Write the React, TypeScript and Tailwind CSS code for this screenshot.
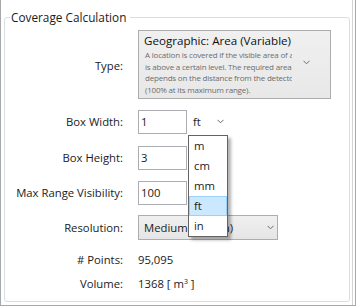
import React from "react";

function Chevron({ className = "" }: { className?: string }) {
  return (
    <svg width="7" height="5" viewBox="0 0 7 5" className={className}>
      <path d="M0.5 0.8 L3.5 3.8 L6.5 0.8" fill="none" stroke="#6a6a6a" strokeWidth="1" />
    </svg>
  );
}

function Label({ children, className = "" }: { children: React.ReactNode; className?: string }) {
  return <div className={"w-[118px] shrink-0 text-right " + className}>{children}</div>;
}

export default function App() {
  const items = ["m", "cm", "mm", "ft", "in"];
  return (
    <div
      className="w-[357px] h-[307px] bg-white text-[11.3px] leading-[16px] text-[#1b1b1b]"
      style={{ fontFamily: '"Open Sans", "Noto Sans", sans-serif' }}
    >
      <div className="w-[356px] h-[306px] border-l border-b border-r border-[#a8a8a8] flex">
        <div className="w-[352px] h-full border-r border-[#d4d4d4]">
          <fieldset className="ml-[3px] mt-[9px] w-[346px] h-[293px] border border-[#d5dfe5] rounded-[3px] min-w-0">
            <legend className="ml-[5px] pl-[1px] pr-[4px] text-[11.8px] leading-[16px] text-[#1b1b1b]">
              Coverage Calculation
            </legend>
            <div className="flex flex-col">
              {/* Type */}
              <div className="flex items-center mt-[5px]">
                <Label className="pt-[3px]">Type:</Label>
                <div className="ml-[15px] w-[193px] h-[69px] border border-[#adadad] bg-gradient-to-b from-[#f0f0f0] to-[#e8e8e8] flex items-center">
                  <div className="w-[153px] pl-[5px] pt-[2px] self-start overflow-hidden">
                    <div className="text-[11.6px] leading-[16px] text-[#111] whitespace-nowrap">
                      Geographic: Area (Variable)
                    </div>
                    <div className="text-[8px] leading-[11.7px] tracking-[-0.2px] text-[#6d6d6d] whitespace-nowrap pl-[1px]">
                      <div>A location is covered if the visible area of a</div>
                      <div>is above a certain level. The required area</div>
                      <div>depends on the distance from the detector</div>
                      <div>(100% at its maximum range).</div>
                    </div>
                  </div>
                  <Chevron className="ml-[11px] mb-[4px]" />
                </div>
              </div>

              {/* Box Width */}
              <div className="flex items-center mt-[11px]">
                <Label>Box Width:</Label>
                <div className="ml-[15px] w-[49px] h-[24px] border border-[#abadb3] bg-white pl-[2px] flex items-center">1</div>
                <div className="relative ml-[1px] w-[40px] h-[24px] flex items-center pl-[5px]">
                  <span>ft</span>
                  <Chevron className="ml-[16px] mb-[2px]" />
                  <div className="absolute left-0 top-[25px] w-[40px] border border-[#646464] bg-white shadow-[3px_3px_3px_rgba(0,0,0,0.3)] z-10">
                    {items.map((it) => (
                      <div
                        key={it}
                        className={
                          it === "ft"
                            ? "h-[20px] flex items-center pl-[4px] bg-[#cce8ff] border border-[#99d1ff]"
                            : "h-[20px] flex items-center pl-[5px]"
                        }
                      >
                        {it}
                      </div>
                    ))}
                  </div>
                </div>
              </div>

              {/* Box Height */}
              <div className="flex items-center mt-[12px]">
                <Label>Box Height:</Label>
                <div className="ml-[15px] w-[49px] h-[24px] border border-[#abadb3] bg-white pl-[2px] flex items-center">3</div>
              </div>

              {/* Max Range */}
              <div className="flex items-center mt-[11px]">
                <Label>Max Range Visibility:</Label>
                <div className="ml-[15px] w-[49px] h-[24px] border border-[#abadb3] bg-white pl-[2px] flex items-center">100</div>
              </div>

              {/* Resolution */}
              <div className="flex items-center mt-[10px]">
                <Label>Resolution:</Label>
                <div className="ml-[15px] w-[140px] h-[25px] border border-[#adadad] bg-gradient-to-b from-[#f0f0f0] to-[#e5e5e5] flex items-center pl-[5px]">
                  <span className="w-[122px] whitespace-nowrap overflow-hidden">Medium (0.25 m)</span>
                  <Chevron className="ml-[1px]" />
                </div>
              </div>

              {/* Points */}
              <div className="flex items-center mt-[8px] h-[24px]">
                <Label># Points:</Label>
                <div className="ml-[15px]">95,095</div>
              </div>

              {/* Volume */}
              <div className="flex items-center h-[24px]">
                <Label>Volume:</Label>
                <div className="ml-[15px]">
                  1368 [ m<span className="relative top-[-4px] text-[7px] leading-none">3</span> ]
                </div>
              </div>
            </div>
          </fieldset>
        </div>
      </div>
    </div>
  );
}
